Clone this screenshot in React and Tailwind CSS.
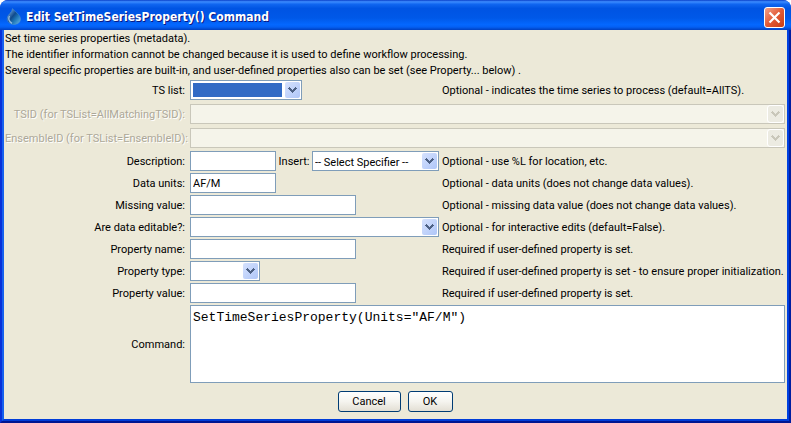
const field = 'h-5 border border-[#7f9db9] bg-white text-black outline-none';

function Chevron({ disabled }) {
  return (
    <svg width="9" height="6" viewBox="0 0 9 6" shapeRendering="crispEdges" aria-hidden="true">
      <path
        fill={disabled ? '#c9c7ba' : '#4d6185'}
        d="M1 0h1v1h1v1h1v1h1v-1h1v-1h1v-1h1v1h1v1h-1v1h-1v1h-1v1h-1v1h-1v-1h-1v-1h-1v-1h-1v-1h-1v-1h1z"
      />
    </svg>
  );
}

function Combo({ id, className, options = [''], disabled = false, selected = false }) {
  return (
    <div className={`relative h-5 ${disabled ? 'bg-[#f5f4ea]' : 'bg-white'} ${className}`}>
      <select
        id={id}
        disabled={disabled}
        className={`block h-5 w-full appearance-none border pr-[19px] pl-0.5 leading-[14px] opacity-100 outline-none ${
          disabled ? 'border-[#c9c7ba]' : 'border-[#7f9db9]'
        } ${selected ? 'bg-[#316ac5] bg-clip-content py-0.5 text-white' : 'bg-transparent pt-1 text-black'}`}
      >
        {options.map((o) => (
          <option key={o}>{o}</option>
        ))}
      </select>
      <span
        className={`pointer-events-none absolute top-0.5 right-0.5 flex h-4 w-[15px] items-center justify-center rounded-xs ${
          disabled
            ? 'bg-[#ecebe2] outline outline-white'
            : 'bg-linear-to-br from-[#d5e1fd] to-[#afc6f8]'
        }`}
      >
        <Chevron disabled={disabled} />
      </span>
    </div>
  );
}

function Row({ label, id, help, wide = false, disabled = false, children }) {
  return (
    <div className="grid grid-cols-[182px_249px_1fr] items-center gap-x-[3px]">
      <label
        htmlFor={id}
        className={`pt-0.5 pr-0.5 text-right whitespace-nowrap ${
          disabled ? 'text-[#aca899] [text-shadow:1px_1px_0_#fff]' : ''
        }`}
      >
        {label}
      </label>
      <div className={`flex items-center ${wide ? 'col-span-2' : ''}`}>{children}</div>
      {help && <span className="pt-0.5 whitespace-nowrap">{help}</span>}
    </div>
  );
}

function TextBox({ id, className, value = '' }) {
  return <input id={id} type="text" defaultValue={value} className={`${field} px-0.5 leading-4 ${className}`} />;
}

function PushButton({ className, children }) {
  return (
    <button
      type="button"
      className={`flex h-[21px] items-center justify-center rounded-[3px] border border-[#003c74] bg-linear-to-b from-white via-[#f5f4ef] to-[#e3dfd4] ${className}`}
    >
      {children}
    </button>
  );
}

export default function App() {
  return (
    <div className="bg-white">
      <div className="flex min-h-screen flex-col overflow-hidden rounded-t-lg bg-[#0842d8] font-[Roboto,sans-serif] text-[11px] leading-4 text-black">
        <header className="flex h-[30px] items-center bg-[linear-gradient(to_bottom,#0a3fc8_0%,#3c8cff_6%,#1066f0_14%,#0054e3_28%,#0058e8_60%,#0468ff_82%,#0460f4_90%,#0040c0_100%)] pt-1 pr-1.5 pl-1.5">
          <svg width="16" height="18" viewBox="0 0 16 18" className="mr-1 shrink-0" aria-hidden="true">
            <defs>
              <linearGradient id="drop" x1="0" y1="0" x2="1" y2="1">
                <stop offset="0.2" stopColor="#5a8fc8" />
                <stop offset="0.45" stopColor="#0f4a8c" />
                <stop offset="0.65" stopColor="#1f78b8" />
                <stop offset="1" stopColor="#6ab8e8" />
              </linearGradient>
            </defs>
            <path
              d="M6.500 0.500C8 3 14.500 6.500 14.500 11C14.500 14.300 11.800 16.500 8 16.500C4 16.500 1.200 14 1.200 10.500C1.200 6.500 6 5 6.500 0.500Z"
              fill="url(#drop)"
              stroke="#4a8ed0"
              strokeWidth="0.500"
            />
            <path d="M3.500 8C2.200 10.500 3 13.500 6 15.300" fill="none" stroke="#8fb8e0" strokeWidth="1.400" />
          </svg>
          <h1 className="flex-1 font-['DejaVu_Sans_Condensed','Open_Sans',sans-serif] text-[12px] leading-5 font-bold whitespace-nowrap text-white [text-shadow:1px_1px_0_#0a1883]">
            Edit SetTimeSeriesProperty() Command
          </h1>
          <button
            type="button"
            aria-label="Close"
            className="flex size-[21px] items-center justify-center rounded-[3px] border border-white bg-linear-to-br from-[#f0a088] via-[#e25a35] to-[#c83c10]"
          >
            <svg width="13" height="13" viewBox="0 0 13 13" aria-hidden="true">
              <path d="M1.500 1.500L11.500 11.500M11.500 1.500L1.500 11.500" stroke="#fff" strokeWidth="2.200" />
            </svg>
          </button>
        </header>

        <div className="flex flex-1 flex-col border-r-2 border-b-2 border-l-2 border-r-[#001ea0] border-b-[#001590] border-l-[#0831d9]">
          <main className="flex flex-1 flex-col border-r-2 border-b-2 border-l-2 border-r-[#0040e0] border-b-[#003dd8] border-l-[#1660ee] bg-[#ece9d8] pr-0.5 pl-px">
            <div className="pt-px">
              <p>Set time series properties (metadata).</p>
              <p>The identifier information cannot be changed because it is used to define workflow processing.</p>
              <p>
                Several specific properties are built-in, and user-defined properties also can be set (see Property...
                below) .
              </p>
            </div>

            <form className="flex flex-col pt-px">
              <div className="flex flex-col gap-1">
                <Row label="TS list:" id="tslist" help="Optional - indicates the time series to process (default=AllTS).">
                  <Combo id="tslist" className="w-28" selected />
                </Row>
                <Row label="TSID (for TSList=AllMatchingTSID):" id="tsid" wide disabled>
                  <Combo id="tsid" className="w-full" disabled />
                </Row>
                <Row label="EnsembleID (for TSList=EnsembleID):" id="ensemble" wide disabled>
                  <Combo id="ensemble" className="w-full" disabled />
                </Row>
              </div>

              <div className="mt-[3px] flex flex-col gap-0.5">
                <Row label="Description:" id="description" help="Optional - use %L for location, etc.">
                  <TextBox id="description" className="w-[86px]" />
                  <label htmlFor="insert" className="flex-1 pt-0.5 text-center whitespace-nowrap">
                    Insert:
                  </label>
                  <Combo id="insert" className="w-[127px]" options={['-- Select Specifier --']} />
                </Row>
                <Row label="Data units:" id="units" help="Optional - data units (does not change data values).">
                  <TextBox id="units" className="w-[86px]" value="AF/M" />
                </Row>
                <Row
                  label="Missing value:"
                  id="missing"
                  help="Optional - missing data value (does not change data values)."
                >
                  <TextBox id="missing" className="w-[166px]" />
                </Row>
                <Row
                  label="Are data editable?:"
                  id="editable"
                  help="Optional - for interactive edits (default=False)."
                >
                  <Combo id="editable" className="w-full" />
                </Row>
                <Row label="Property name:" id="pname" help="Required if user-defined property is set.">
                  <TextBox id="pname" className="w-[166px]" />
                </Row>
                <Row
                  label="Property type:"
                  id="ptype"
                  help="Required if user-defined property is set - to ensure proper initialization."
                >
                  <Combo id="ptype" className="w-[70px]" />
                </Row>
                <Row label="Property value:" id="pvalue" help="Required if user-defined property is set.">
                  <TextBox id="pvalue" className="w-[166px]" />
                </Row>
                <Row label="Command:" id="command" wide>
                  <textarea
                    id="command"
                    rows={4}
                    defaultValue={'SetTimeSeriesProperty(Units="AF/M")'}
                    className="block h-[78px] w-full resize-none border border-[#7f9db9] bg-white px-0.5 py-1 font-['Liberation_Mono',monospace] text-[13px] leading-4 outline-none"
                  />
                </Row>
              </div>

              <div className="mt-2 flex justify-center gap-[7px]">
                <PushButton className="w-[63px]">Cancel</PushButton>
                <PushButton className="w-[45px]">OK</PushButton>
              </div>
            </form>
          </main>
        </div>
      </div>
    </div>
  );
}
